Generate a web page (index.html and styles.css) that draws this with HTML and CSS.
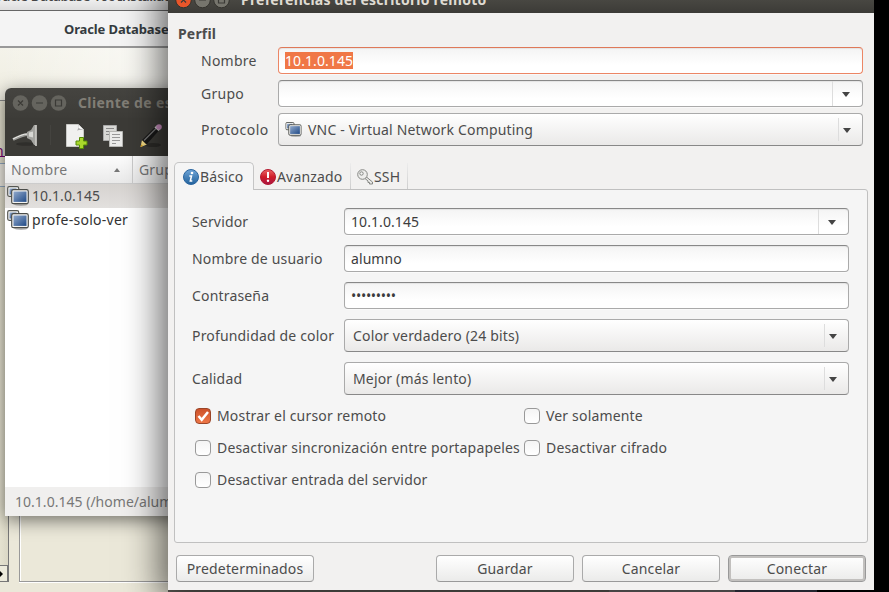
FILE: index.html
```html
<!DOCTYPE html>
<html lang="es">
<head>
<meta charset="utf-8">
<title>Preferencias del escritorio remoto</title>
<link rel="stylesheet" href="styles.css">
</head>
<body>
<svg width="0" height="0" class="defs" aria-hidden="true">
  <defs>
    <linearGradient id="screen" x1="0" y1="0" x2="1" y2="1"><stop offset="0" stop-color="#91a9cc"/><stop offset="1" stop-color="#204a87"/></linearGradient>
    <linearGradient id="info" x1="0" y1="0" x2="0" y2="1"><stop offset="0" stop-color="#6fa5d8"/><stop offset="1" stop-color="#22629c"/></linearGradient>
    <linearGradient id="warn" x1="0" y1="0" x2="0" y2="1"><stop offset="0" stop-color="#ea6666"/><stop offset=".5" stop-color="#d01c28"/><stop offset="1" stop-color="#a81545"/></linearGradient>
    <symbol id="screens" viewBox="0 0 22 20">
      <ellipse cx="14" cy="18.300" rx="7" ry="1.600" fill="#888" opacity=".6"/>
      <rect x=".7" y=".7" width="11" height="9.600" rx="1.500" fill="#f4f4f2" stroke="#555753" stroke-width="1.200"/>
      <rect x="2.500" y="2.500" width="7" height="6" fill="url(#screen)"/>
      <rect x="4.700" y="3.700" width="16.600" height="14" rx="1.800" fill="#f4f4f2" stroke="#4b4d4a" stroke-width="1.200"/>
      <rect x="6.500" y="5.500" width="13" height="10.400" fill="url(#screen)"/>
    </symbol>
  </defs>
</svg>
<main class="desktop">
  <section class="installer">
    <div class="installer-title"><span>Oracle Database 10c Installation</span></div>
    <div class="installer-head"><span>Oracle Database</span></div>
    <div class="installer-body">
      <div class="side"><span class="link">n</span><i class="field"></i><i class="scroll"><b></b></i></div>
      <div class="pane"></div>
    </div>
  </section>

  <section class="client">
    <header class="client-title">
      <svg width="60" height="18" viewBox="0 0 60 18"><g fill="#65645e"><circle cx="8.500" cy="9" r="7.800"/><circle cx="27.500" cy="9" r="7.800"/><circle cx="46.500" cy="9" r="7.800"/></g><path d="M6 6.500l5 5m0-5l-5 5M24 9h7M43.500 6h6v6h-6z" fill="none" stroke="#3b3a36" stroke-width="1.200"/></svg>
      <span>Cliente de escritorio</span>
    </header>
    <div class="toolbar">
      <svg width="165" height="34" viewBox="0 0 165 34">
        <ellipse cx="21" cy="27" rx="10" ry="1.800" fill="#2f2e2b"/>
        <path d="M8 22.500C14 19.500 18 17.500 23 17.500" fill="none" stroke="#9b9b97" stroke-width="3"/><path d="M8 22C14 19 18 17 23 17" fill="none" stroke="#f0f0ec" stroke-width="1"/>
        <path d="M22 15l4-2 3-5h1.500v20H29l-3-5-4-2z" fill="#a3a39f"/><path d="M24 15.500l4-1v6l-4-1z" fill="#d8d8d4"/><path d="M31 8v21" stroke="#dededa" stroke-width="1.500"/>
        <path d="M45.500 8v20" stroke="#44433f"/>
        <path d="M61.500 7.500h12l5 5v17h-17z" fill="#f0f0ef" stroke="#c8c8c5"/><path d="M73 7.500c1 3 0 5-1 6 3-1 5-1 7 0z" fill="#aaa"/><path d="M73.500 8l5 5-5-2z" fill="#fff"/>
        <path d="M74.500 20.500h4v3.500h3.500v4h-3.500v3.500h-4V28H71v-4h3.500z" fill="#a8d72b" stroke="#548b06"/>
        <path d="M98.500 8.500h13v15h-13z" fill="#d8d8d5" stroke="#aaa"/><path d="M101 11.500h8m-8 3h7m-7 3h4" stroke="#888"/>
        <path d="M104.500 14.500h13v15h-13z" fill="#ececeb" stroke="#b8b8b5"/><path d="M107 17.500h8m-8 3h8m-8 3h8m-8 3h4" stroke="#999"/>
        <ellipse cx="148" cy="28" rx="8" ry="2" fill="#2c2b28"/>
        <path d="M135.500 30l1.500-7 5 4.500z" fill="#f4dc85"/><path d="M135.500 30l.8-2.800 1.700 1.700z" fill="#d6a020"/><path d="M137 23l12.500-12.500 4 3.500-12 13.500z" fill="#181818"/><path d="M139 23.500l12-12" stroke="#777" stroke-width="1.200"/><path d="M149.500 10.500l2-2 4 3.500-2 2z" fill="#d6d6d2"/><circle cx="154" cy="10" r="2.800" fill="#ca8fc0"/>
      </svg>
    </div>
    <div class="cols"><div class="col-name"><span>Nombre</span><i></i></div><div class="col-group"><span>Grupo</span></div></div>
    <ul class="list">
      <li class="selected"><svg width="22" height="20"><use href="#screens"/></svg><span>10.1.0.145</span></li>
      <li><svg width="22" height="20"><use href="#screens"/></svg><span class="profe">profe-solo-ver</span></li>
    </ul>
    <footer class="status"><span>10.1.0.145 (/home/alumno/)</span></footer>
  </section>

  <section class="dialog">
    <header class="dialog-title">
      <svg width="60" height="18" viewBox="0 0 60 18"><circle cx="8.500" cy="9" r="7.800" fill="#e9562a" stroke="#34332e"/><g fill="#76756d" stroke="#34332e"><circle cx="27.500" cy="9" r="7.800"/><circle cx="46.500" cy="9" r="7.800"/></g><path d="M6 6.500l5 5m0-5l-5 5M24 9h7M43.500 6h6v6h-6z" fill="none" stroke="#3b3a36" stroke-width="1.200"/></svg>
      <span>Preferencias del escritorio remoto</span>
    </header>
    <div class="profile">
      <h1><span>Perfil</span></h1>
      <div class="row"><label><span>Nombre</span></label><div class="entry focus"><mark>10.1.0.145</mark></div></div>
      <div class="row"><label><span>Grupo</span></label><div class="entry"><i class="drop"></i></div></div>
      <div class="row tall"><label><span>Protocolo</span></label><div class="combo"><svg width="17" height="15" viewBox="0 0 22 20"><use href="#screens" width="22" height="20"/></svg><span>VNC - Virtual Network Computing</span><i class="drop"></i></div></div>
    </div>
    <nav class="tabs">
      <div class="tab active"><svg width="16" height="16" viewBox="0 0 16 16"><circle cx="8" cy="8" r="7.500" fill="url(#info)" stroke="#2b66a0"/><circle cx="9" cy="4" r="1.300" fill="#fff"/><path d="M6.300 7h2.200l-1.200 5h2" fill="none" stroke="#fff" stroke-width="1.500"/></svg><span>Básico</span></div>
      <div class="tab avanzado"><svg width="16" height="16" viewBox="0 0 16 16"><circle cx="8" cy="8" r="7.500" fill="url(#warn)" stroke="#b31b32"/><path d="M8 3v6" stroke="#fff" stroke-width="2"/><circle cx="8" cy="11.800" r="1.200" fill="#fff"/></svg><span>Avanzado</span></div>
      <div class="tab ssh"><svg width="17" height="16" viewBox="0 0 17 16"><path d="M9.500 8l6 5v2h-3v-1.500h-1.500V12L8 9.500z" fill="#e8e8e6" stroke="#858783"/><circle cx="5.500" cy="5.500" r="4.800" fill="#eeeeec" stroke="#858783"/><circle cx="4.500" cy="4.500" r="1.700" fill="#f5f5f4" stroke="#858783"/></svg><span>SSH</span></div>
    </nav>
    <div class="panel">
      <div class="row"><label><span>Servidor</span></label><div class="entry"><span>10.1.0.145</span><i class="drop"></i></div></div>
      <div class="row"><label><span>Nombre de usuario</span></label><div class="entry"><span>alumno</span></div></div>
      <div class="row"><label><span>Contraseña</span></label><div class="entry"><span class="dots">•••••••••</span></div></div>
      <div class="row tall"><label><span>Profundidad de color</span></label><div class="combo"><span>Color verdadero (24 bits)</span><i class="drop"></i></div></div>
      <div class="row tall"><label><span>Calidad</span></label><div class="combo"><span>Mejor (más lento)</span><i class="drop"></i></div></div>
      <div class="checks">
        <div class="check on"><i><svg width="16" height="16" viewBox="0 0 16 16"><path d="M3.500 8l3.200 3.700L13 4" fill="none" stroke="#fff" stroke-width="2.500"/></svg></i><span>Mostrar el cursor remoto</span></div>
        <div class="check"><i></i><span>Ver solamente</span></div>
        <div class="check"><i></i><span>Desactivar sincronización entre portapapeles</span></div>
        <div class="check"><i></i><span>Desactivar cifrado</span></div>
        <div class="check"><i></i><span>Desactivar entrada del servidor</span></div>
      </div>
    </div>
    <footer class="actions">
      <div class="btn first"><span>Predeterminados</span></div>
      <div class="btn"><span>Guardar</span></div>
      <div class="btn"><span>Cancelar</span></div>
      <div class="btn default"><span>Conectar</span></div>
    </footer>
  </section>
</main>
</body>
</html>
```
FILE: styles.css
```css
* { box-sizing: border-box; }
body { margin: 0; font: 14px/20px "Noto Sans", "Open Sans", sans-serif; letter-spacing: .17px; color: #4c4c4c; }
.defs { position: absolute; }
i { font-style: normal; }
span, mark { white-space: nowrap; }
.desktop { position: relative; width: 889px; height: 592px; overflow: hidden; background: linear-gradient(90deg, #6b6862 0 609px, #7c7979 609px 735px, #3f4053 735px 817px, #000 817px); }

.installer { position: absolute; left: 0; top: 0; width: 168px; height: 592px; overflow: hidden; background: #eceadb; }
.installer-title { height: 11px; background: linear-gradient(#eee, #ddd); border-bottom: 1px solid #666; overflow: hidden; font-size: 13.5px; font-weight: 600; letter-spacing: -.35px; color: #444; }
.installer-title span { display: block; margin: -14px 0 0 -13px; }
.installer-head { height: 37px; padding: 8px 0 0 64px; background: #f4f4f4; border-bottom: 2px solid #999; font-weight: bold; font-size: 13px; letter-spacing: -.12px; color: #353b40; }
.installer-body { height: 544px; display: flex; background: linear-gradient(90deg, transparent, #fff9) top / 100% 40px no-repeat, linear-gradient(#f4f3ea, #ebe8d9 100px); }
.side { width: 9px; height: 482px; margin-top: 52px; border-top: 1px solid #888; border-right: 1px solid #777; display: flex; flex-direction: column; background: linear-gradient(90deg, #e5e2d0, #dad7c5); }
.link { display: block; height: 15px; margin-top: 41px; margin-left: -5px; color: #75006c; border-bottom: 1px solid #75006c; line-height: 17px; }
.field { height: 24px; margin-top: 6px; border: 1px solid #91a7bf; border-width: 1px 0; background: #ece9e0; }
.scroll { margin-top: auto; display: flex; align-items: center; width: 8px; height: 17px; background: #eceadb; border: 1px solid #777; border-left: 0; }
.scroll b { border: 3px solid transparent; border-left-color: #000; border-right: 0; }
.pane { flex: 1; margin: 100px 0 10px 10px; border: 1px solid #999; border-right: 0; box-shadow: inset 1px 0 #fff, 0 1px #fff; }

.client { position: absolute; left: 5px; top: 88px; width: 320px; height: 428px; display: flex; flex-direction: column; background: #fff; border-radius: 6px 6px 0 0; box-shadow: 0 4px 18px #0008; overflow: hidden; }
.client-title { height: 30px; background: linear-gradient(#454440, #3d3c38); display: flex; align-items: center; padding-left: 7px; gap: 6px; font-weight: bold; letter-spacing: .38px; color: #817e76; }
.toolbar { height: 38px; background: #3c3b37; }
.toolbar svg { display: block; margin-top: -1px; }
.cols { height: 28px; display: flex; background: linear-gradient(#fdfdfd, #eaeaea); border-bottom: 1px solid #ccc; color: #777; line-height: 27px; }
.col-name { width: 128px; padding: 0 12px 0 6px; display: flex; align-items: center; justify-content: space-between; border-right: 1px solid #ccc; letter-spacing: .4px; }
.col-name i { border: 3px solid transparent; border-bottom: 4px solid #777; border-top: 0; }
.col-group { padding-left: 6px; }
.list { list-style: none; margin: 0; padding: 0; flex: 1; }
.list li { height: 24px; display: flex; align-items: center; gap: 3px; padding-left: 2px; color: #333; }
.list .selected { background: linear-gradient(#d6d3d0, #e2e0de); color: #4c4c4c; letter-spacing: .08px; }
.profe { letter-spacing: .27px; }
.status { height: 29px; padding: 5px 10px; background: #f0efee; color: #777; letter-spacing: .02px; }

.dialog { position: absolute; left: 168px; top: -15px; width: 706px; height: 605px; background: #f2f1f0; box-shadow: 0 3px 34px 8px #0009; clip-path: inset(0 0 -2px -70px); }
.dialog-title { height: 28px; display: flex; align-items: center; padding-left: 7px; gap: 6px; background: linear-gradient(#56554e, #3c3b37); color: #dfdbd2; font-weight: bold; letter-spacing: .22px; }
.dialog-title svg { margin-top: 1px; }
.dialog-title span { margin-top: 2px; }
.profile { padding: 11px 11px 0 10px; }
h1 { margin: 0 0 3px; font-size: 14px; line-height: 20px; }
.row { display: flex; align-items: center; height: 27px; margin-bottom: 6px; }
.row.tall { height: 33px; }
.profile label { width: 100px; padding-left: 23px; letter-spacing: .25px; }
.profile .tall label { letter-spacing: .5px; }
.entry, .combo { flex: 1; align-self: stretch; display: flex; align-items: center; border: 1px solid #aaa; border-radius: 4px; }
.entry { padding: 0 6px; background: linear-gradient(#f4f4f4, #fff 70%); border-top-color: #888; box-shadow: inset 0 1px 1px #0001, 0 1px #fff8; color: #3c3c3c; letter-spacing: .08px; }
.entry.focus { border-color: #ec8665; border-top-color: #df7959; }
mark { background: #f07746; color: #fff; height: 17px; line-height: 17px; }
.combo { padding: 0 8px; gap: 6px; background: linear-gradient(#fff, #eae9e8); border-bottom-color: #888; }
.profile .combo { padding-left: 6px; }
.drop { margin-left: auto; width: 24px; height: 25px; border-left: 1px solid #ddd; display: flex; align-items: center; padding-left: 9px; }
.drop::after { content: ""; border: 4.500px solid transparent; border-top: 5px solid #444; border-bottom: 0; margin-top: 2px; }
.combo .drop { width: 16px; height: 23px; padding-left: 4px; }

.tabs { display: flex; align-items: flex-end; height: 28px; margin: 16px 6px -1px; position: relative; z-index: 1; }
.tab { height: 26px; display: flex; align-items: center; }
.tab.active { width: 80px; height: 28px; padding-left: 8px; gap: 1px; background: #f5f5f5; border: 1px solid #c5c5c5; border-bottom: 0; border-radius: 5px 5px 0 0; }
.avanzado, .ssh { border-right: 1px solid; border-image: linear-gradient(#eee, #ccc) 1; margin-bottom: 1px; }
.avanzado { width: 97px; padding: 2px 0 0 6px; gap: 1px; }
.ssh { width: 57px; padding: 2px 0 0 6px; }
.panel { height: 354px; margin: 0 6px; padding: 18px 18px 0 17px; background: #f5f5f5; border: 1px solid #c0c0c0; border-radius: 0 3px 3px 3px; }
.panel .row { margin-bottom: 10px; }
.panel label { width: 152px; }
.dots { font-size: 14px; letter-spacing: -.3px; }
.checks { display: grid; grid-template-columns: 329px 1fr; grid-auto-rows: 32px; margin: -5px 0 0 3px; }
.check { display: flex; align-items: center; gap: 6px; }
.check i { display: block; width: 16px; height: 16px; flex: none; border: 1px solid #999; border-radius: 4px; background: linear-gradient(#f4f4f4, #fff); }
.check.on i { background: linear-gradient(#cc512a, #ee7646); border-color: #9b4527; }
.check svg { display: block; margin: -1px 0 0 -1px; }
.actions { display: flex; gap: 8px; padding: 12px 8px 0; }
.btn { width: 138px; height: 27px; border: 1px solid #aaa; border-bottom-color: #999; border-radius: 4px; background: linear-gradient(#fff, #ebebea); display: flex; align-items: center; justify-content: center; }
.btn.first { margin-right: 114px; }
.btn.default { box-shadow: inset 0 0 0 2px #c2c0be; border-color: #999; }
```
